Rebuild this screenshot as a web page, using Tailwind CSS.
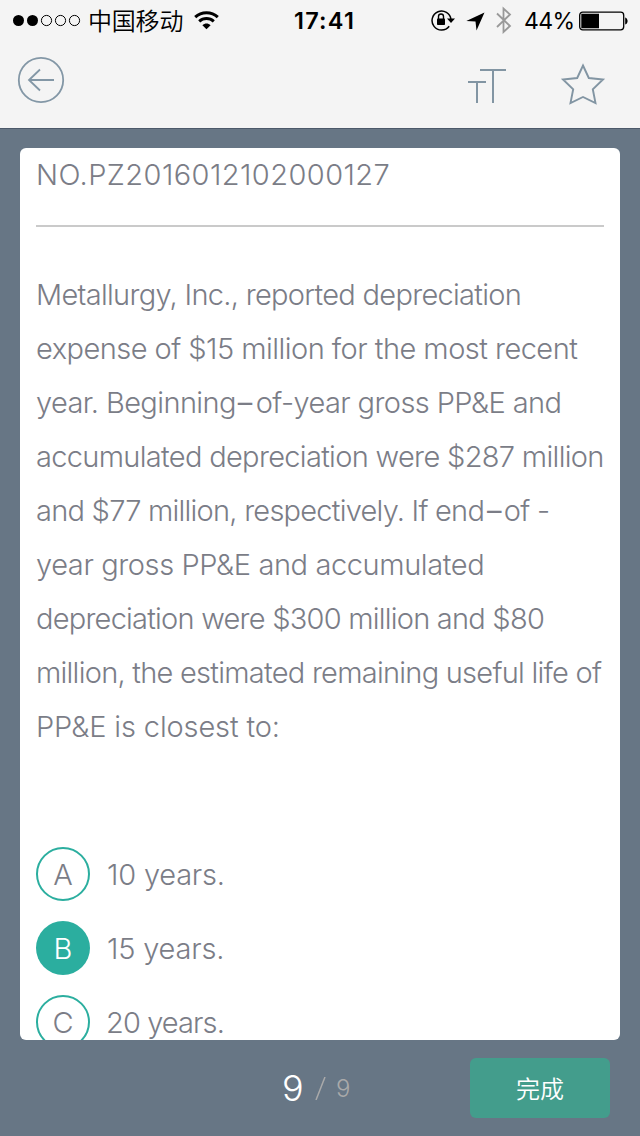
<!DOCTYPE html>
<html lang="zh">
<head>
<meta charset="utf-8">
<title>Question 9</title>
<script src="https://cdn.jsdelivr.net/npm/@tailwindcss/browser@4"></script>
</head>
<body class="w-[640px] h-[1136px] overflow-hidden bg-[#677685] font-['Inter','Noto_Sans_CJK_SC',sans-serif] text-[#7b7d87] flex flex-col">
<header class="h-[129px] shrink-0 bg-[#f4f4f4] border-b border-[#4c596a]">
  <div class="h-10 flex items-center text-black pl-[13px] pr-[11px]">
    <svg class="w-[68px] h-[14px]" viewBox="0 0 68 14"><circle cx="5.5" cy="7.500" r="5.5"/><circle cx="19.5" cy="7.500" r="5.5"/><g fill="none" stroke="#000"><circle cx="33.5" cy="7.500" r="5.1"/><circle cx="47.5" cy="7.500" r="5.1"/><circle cx="61.5" cy="7.500" r="5.1"/></g></svg>
    <span class="ml-[7px] text-[24px] leading-10 w-[96px] whitespace-nowrap font-[350] tracking-[-0.2px] font-['Noto_Sans_CJK_SC',sans-serif]">中国移动</span>
    <svg class="ml-[10px] w-[25px] h-[19px]" viewBox="0 0 25 19" fill="none" stroke="#000" stroke-width="3"><path d="M1.2 6.2C7.5.3 17.5.3 23.8 6.2M5.2 10.3c4.2-3.8 10.4-3.8 14.6 0"/><path d="M8.4 14.2c2.4-2.2 5.8-2.2 8.2 0L12.5 18.300z" fill="#000" stroke="none"/></svg>
    <span class="ml-[75px] mt-[2px] w-[62px] whitespace-nowrap text-[23.5px] font-semibold tracking-[1.2px]">17:41</span>
    <svg class="ml-[75px] w-[24px] h-[22px]" viewBox="0 0 24 22"><path d="M18.200 17.200A9.500 9.500 0 1 1 20 10.500" fill="none" stroke="#000" stroke-width="1.500"/><path d="M16 9.500h8l-4 4.500z"/><rect x="6" y="9.500" width="8" height="6.500" rx=".8"/><path d="M7.500 10V7.500a2.500 2.500 0 0 1 5 0V10" fill="none" stroke="#000" stroke-width="1.400"/></svg>
    <svg class="ml-[11px] mt-[2px] w-[19px] h-[19px]" viewBox="0 0 19 19"><path d="M18.500.5 10.500 18.500 9.500 9.500.3 9z"/></svg>
    <svg class="ml-[11px] w-[16px] h-[28px]" viewBox="0 0 16 28" fill="none" stroke="#999" stroke-width="1.800"><path d="M1 7.500l13 12.500-6.500 6V2.500l6.500 6L1 21"/></svg>
    <span class="ml-[12px] mt-[2px] w-[50px] whitespace-nowrap text-[23px] tracking-[-0.6px]">44%</span>
    <svg class="ml-[5px] mt-[1px] w-[49px] h-[20px]" viewBox="0 0 49 20"><rect x=".7" y="1.200" width="44" height="17.600" rx="3" fill="none" stroke="#000" stroke-width="1.300"/><path d="M2.300 2.800h17.700v14.400H2.300zM46.200 6.500c3.200 1 3.200 6 0 7z"/></svg>
  </div>
  <div class="flex items-start pl-[17px]">
    <svg class="mt-[16px] w-[48px] h-[48px]" viewBox="0 0 48 48" fill="none" stroke="#8397a6" stroke-width="1.800"><circle cx="24" cy="24" r="22.200"/><path d="M37 24H12.500M23 13.500 12 24l11 10.500"/></svg>
    <svg class="ml-[403px] mt-[28px] w-[38px] h-[36px]" viewBox="0 0 38 36" fill="none" stroke="#8295a3" stroke-width="2"><path d="M12 2h26M25 2v33M0 14h18M9 14v21"/></svg>
    <svg class="ml-[54px] mt-[22px] w-[46px] h-[46px]" viewBox="0 0 46 46" fill="none" stroke="#8295a3" stroke-width="1.900"><path d="M23 3.500 28.800 16 43 17.500 32.800 27.300 35.500 41 23 35 10.500 41 13.200 27.300 3 17.500 17.200 16z"/></svg>
  </div>
</header>
<main class="mx-5 mt-[19px] h-[892px] shrink-0 overflow-hidden rounded-md bg-white px-4 text-[29px] font-light">
  <div class="h-[79px] border-b-2 border-[#cacaca] leading-[54px] whitespace-nowrap tracking-[0.43px]">NO.PZ2016012102000127</div>
  <div class="mt-[41px] leading-[54px] whitespace-nowrap">
    <div class="tracking-[-0.7px]">Metallurgy, Inc., reported depreciation</div>
    <div class="tracking-[-0.53px]">expense of $15 million for the most recent</div>
    <div class="tracking-[-0.6px]">year. Beginning<span class="ml-[2px] mr-[4px] font-normal">–</span>of-year gross PP&amp;E and</div>
    <div class="tracking-[-0.68px]">accumulated depreciation were $287 million</div>
    <div class="tracking-[-0.76px]">and $77 million, respectively. If end<span class="mx-[3px] font-normal">–</span>of -</div>
    <div class="tracking-[-0.4px]">year gross PP&amp;E and accumulated</div>
    <div class="tracking-[-0.77px]">depreciation were $300 million and $80</div>
    <div class="tracking-[-0.74px]">million, the estimated remaining useful life of</div>
    <div class="tracking-[-0.13px]">PP&amp;E is closest to:</div>
  </div>
  <div class="mt-[93px] flex flex-col gap-5 leading-[54px] whitespace-nowrap">
    <div class="flex gap-4"><span class="size-[54px] rounded-full border-2 border-[#2bae9f] flex items-center justify-center pt-[2px]">A</span><span class="h-[54px] pt-px pl-px tracking-[-0.2px]">10 years.</span></div>
    <div class="flex gap-4"><span class="size-[54px] rounded-full bg-[#2bae9f] text-white flex items-center justify-center pt-[2px]">B</span><span class="h-[54px] pt-px pl-px tracking-[-0.2px]">15 years.</span></div>
    <div class="flex gap-4"><span class="size-[54px] rounded-full border-2 border-[#2bae9f] flex items-center justify-center pt-[2px]">C</span><span class="h-[54px] pt-px tracking-[-0.9px]">20 years.</span></div>
  </div>
</main>
<footer class="h-[96px] shrink-0 flex items-center pl-[282px] pr-[30px]">
  <span class="text-[36px] text-white w-[22px] font-[350]">9</span>
  <svg class="ml-[11px] w-[11px] h-[23px]" viewBox="0 0 11 23"><path d="M10 0 1 23" stroke="#aaa" stroke-width="1.500"/></svg>
  <span class="ml-[10px] mt-[2px] text-[24px] font-light text-[#aaa]">9</span>
  <button class="ml-auto w-[140px] h-[60px] rounded-md bg-[#439d8c] text-white text-[24px] font-[350] font-['Noto_Sans_CJK_SC',sans-serif]">完成</button>
</footer>
</body>
</html>
